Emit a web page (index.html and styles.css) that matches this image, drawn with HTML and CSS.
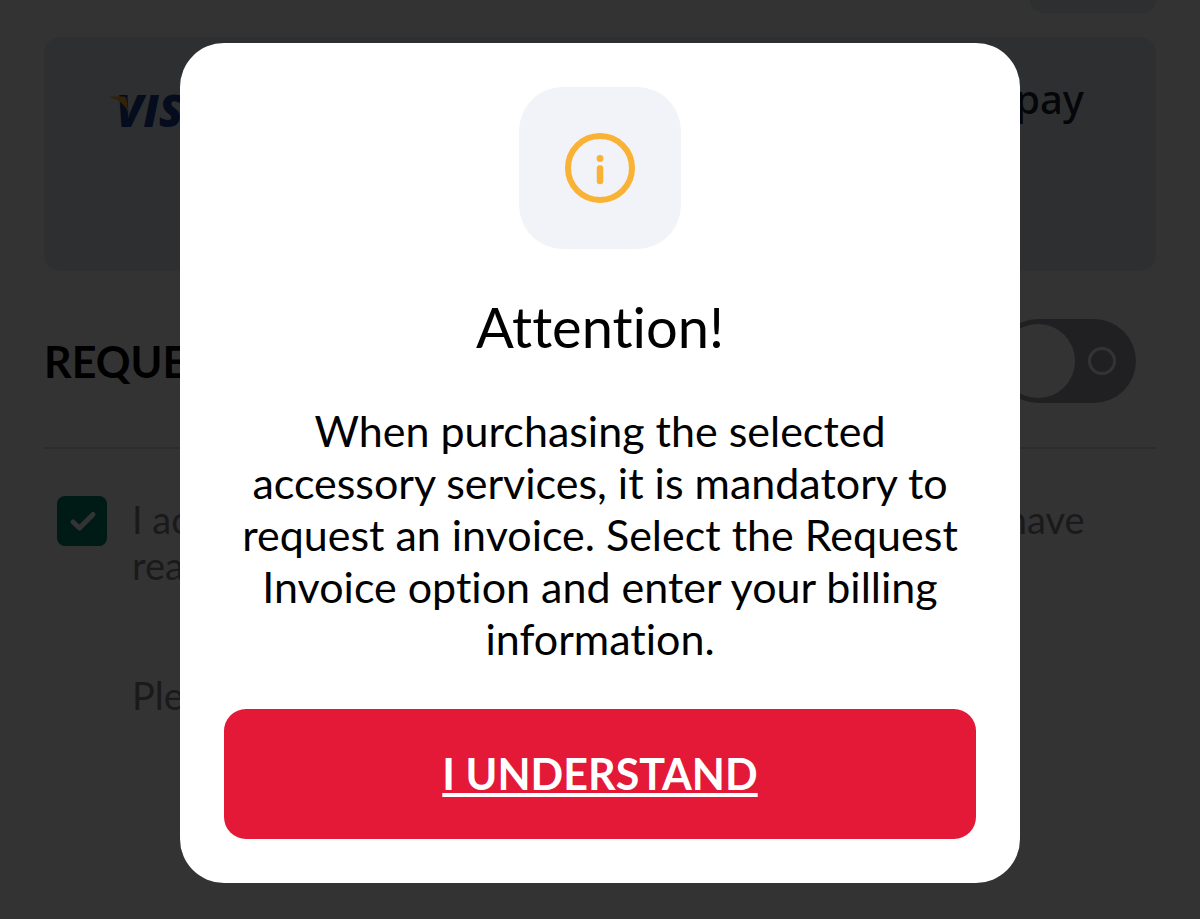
FILE: index.html
```html
<!DOCTYPE html>
<html lang="en">
<head>
    <meta charset="UTF-8">
    <meta name="viewport" content="width=device-width, initial-scale=1.0">
    <title>Payment</title>
    <link rel="stylesheet" href="styles.css">
</head>
<body>
    <main class="checkout">
        <div class="top-tab"></div>

        <!-- Payment methods -->
        <section class="methods">
            <div class="visa">
                <span>VISA</span>
                <svg class="visa-wing" width="20" height="22" viewBox="0 0 20 22" aria-hidden="true">
                    <path d="M0 0.500H13Q16 0.500 16.500 3L18.500 17Q14 5 0 1.500Z" fill="#ffab1f"/>
                </svg>
            </div>
            <span class="amazon">amazon pay</span>
        </section>

        <!-- Invoice switch -->
        <section class="invoice">
            <label class="invoice-title" for="invoice">REQUEST INVOICE</label>
            <input class="switch" type="checkbox" role="switch" id="invoice">
        </section>

        <!-- Terms -->
        <section class="terms">
            <div class="check">
                <input class="check-input" type="checkbox" id="terms" checked>
                <svg class="check-mark" width="50" height="50" viewBox="0 0 50 50" aria-hidden="true">
                    <path d="M16 26L22.500 32L36 18.500" fill="none" stroke="#fff" stroke-width="5" stroke-linecap="round" stroke-linejoin="round"/>
                </svg>
            </div>
            <div class="terms-text">
                <label for="terms">I acknowledge that I accept these general terms and have read the privacy policy</label>
                <p class="terms-note">Please review your order details</p>
            </div>
        </section>
    </main>

    <!-- Dialog -->
    <div class="overlay">
        <div class="modal" role="alertdialog" aria-modal="true" aria-labelledby="modal-title" aria-describedby="modal-text">
            <div class="modal-icon">
                <svg width="72" height="72" viewBox="0 0 72 72" aria-hidden="true">
                    <circle cx="36" cy="36" r="32" fill="none" stroke="#f9b233" stroke-width="6"/>
                    <circle cx="36" cy="26.500" r="3.400" fill="#f9b233"/>
                    <path d="M36 36.500V49" stroke="#f9b233" stroke-width="6.500" stroke-linecap="round"/>
                </svg>
            </div>
            <h1 class="modal-title" id="modal-title">Attention!</h1>
            <p class="modal-text" id="modal-text">When purchasing the selected accessory services, it is mandatory to request an invoice. Select the Request Invoice option and enter your billing information.</p>
            <button class="modal-button" type="button">I UNDERSTAND</button>
        </div>
    </div>
</body>
</html>
```
FILE: styles.css
```css
* {
    box-sizing: border-box;
}

body {
    margin: 0;
    background: #fff;
    color: #000;
    font-family: Lato, "Open Sans", sans-serif;
    font-variant-ligatures: none;
    overflow: hidden;
}

/* --- Page --- */
.checkout {
    padding: 0 44px;
}

.top-tab {
    width: 126px;
    height: 13px;
    margin-left: auto;
    border-radius: 0 0 20px 20px;
    background: #e6e8f2;
}

/* --- Payment Methods --- */
.methods {
    display: flex;
    justify-content: space-between;
    align-items: flex-start;
    height: 234px;
    margin-top: 24px;
    padding: 42px 72px;
    border-radius: 16px;
    background: #e6ebf5;
}

.visa {
    position: relative;
    color: #173f90;
    font: italic 800 44px/62px "Open Sans", sans-serif;
}

.visa-wing {
    position: absolute;
    top: 17px;
    left: -6px;
}

.amazon {
    color: #161e2d;
    font: 500 40px/40px "Noto Sans", sans-serif;
}

/* --- Invoice Switch --- */
.invoice {
    display: flex;
    justify-content: space-between;
    align-items: center;
    padding: 48px 20px 44px 0;
    border-bottom: 2px solid #e0e2ee;
}

.invoice-title {
    font-size: 43px;
    font-weight: bold;
}

.switch {
    display: flex;
    align-items: center;
    justify-content: space-between;
    appearance: none;
    width: 140px;
    height: 84px;
    margin: 0;
    padding: 0 20px 0 5px;
    border-radius: 42px;
    background: #a0a0aa;
}

.switch::before {
    content: "";
    width: 74px;
    height: 74px;
    border-radius: 50%;
    background: #fff;
}

.switch::after {
    content: "";
    width: 22px;
    height: 22px;
    border: 3px solid #fff;
    border-radius: 50%;
}

/* --- Terms --- */
.terms {
    display: flex;
    gap: 25px;
    padding: 47px 13px;
}

.check {
    display: grid;
    flex: none;
    height: 50px;
}

.check-input,
.check-mark {
    grid-area: 1 / 1;
}

.check-input {
    appearance: none;
    width: 50px;
    height: 50px;
    margin: 0;
    border-radius: 8px;
    background: #00806a;
}

.check-mark {
    pointer-events: none;
}

.terms-text {
    color: #80808c;
    font-size: 38px;
    line-height: 46px;
}

.terms-note {
    margin: 84px 0 0;
}

/* --- Dialog --- */
.overlay {
    position: fixed;
    inset: 0;
    display: flex;
    align-items: center;
    justify-content: center;
    padding-top: 6px;
    background: rgba(0, 0, 0, 0.8);
}

.modal {
    display: flex;
    flex-direction: column;
    align-items: center;
    width: 70%;
    padding: 44px;
    border-radius: 44px;
    background: #fff;
    text-align: center;
}

.modal-icon {
    display: flex;
    align-items: center;
    justify-content: center;
    width: 162px;
    height: 162px;
    border-radius: 44px;
    background: #f1f3f8;
}

.modal-title {
    margin: 44px 0;
    font-size: 56px;
    font-weight: normal;
    line-height: 68px;
}

.modal-text {
    margin: 0 0 44px;
    font-size: 43px;
    line-height: 52px;
}

.modal-button {
    width: 100%;
    padding: 38px;
    border: none;
    border-radius: 22px;
    background: #e41937;
    color: #fff;
    font: bold 43px/54px Lato, "Open Sans", sans-serif;
    text-decoration: underline;
    cursor: pointer;
}
```
